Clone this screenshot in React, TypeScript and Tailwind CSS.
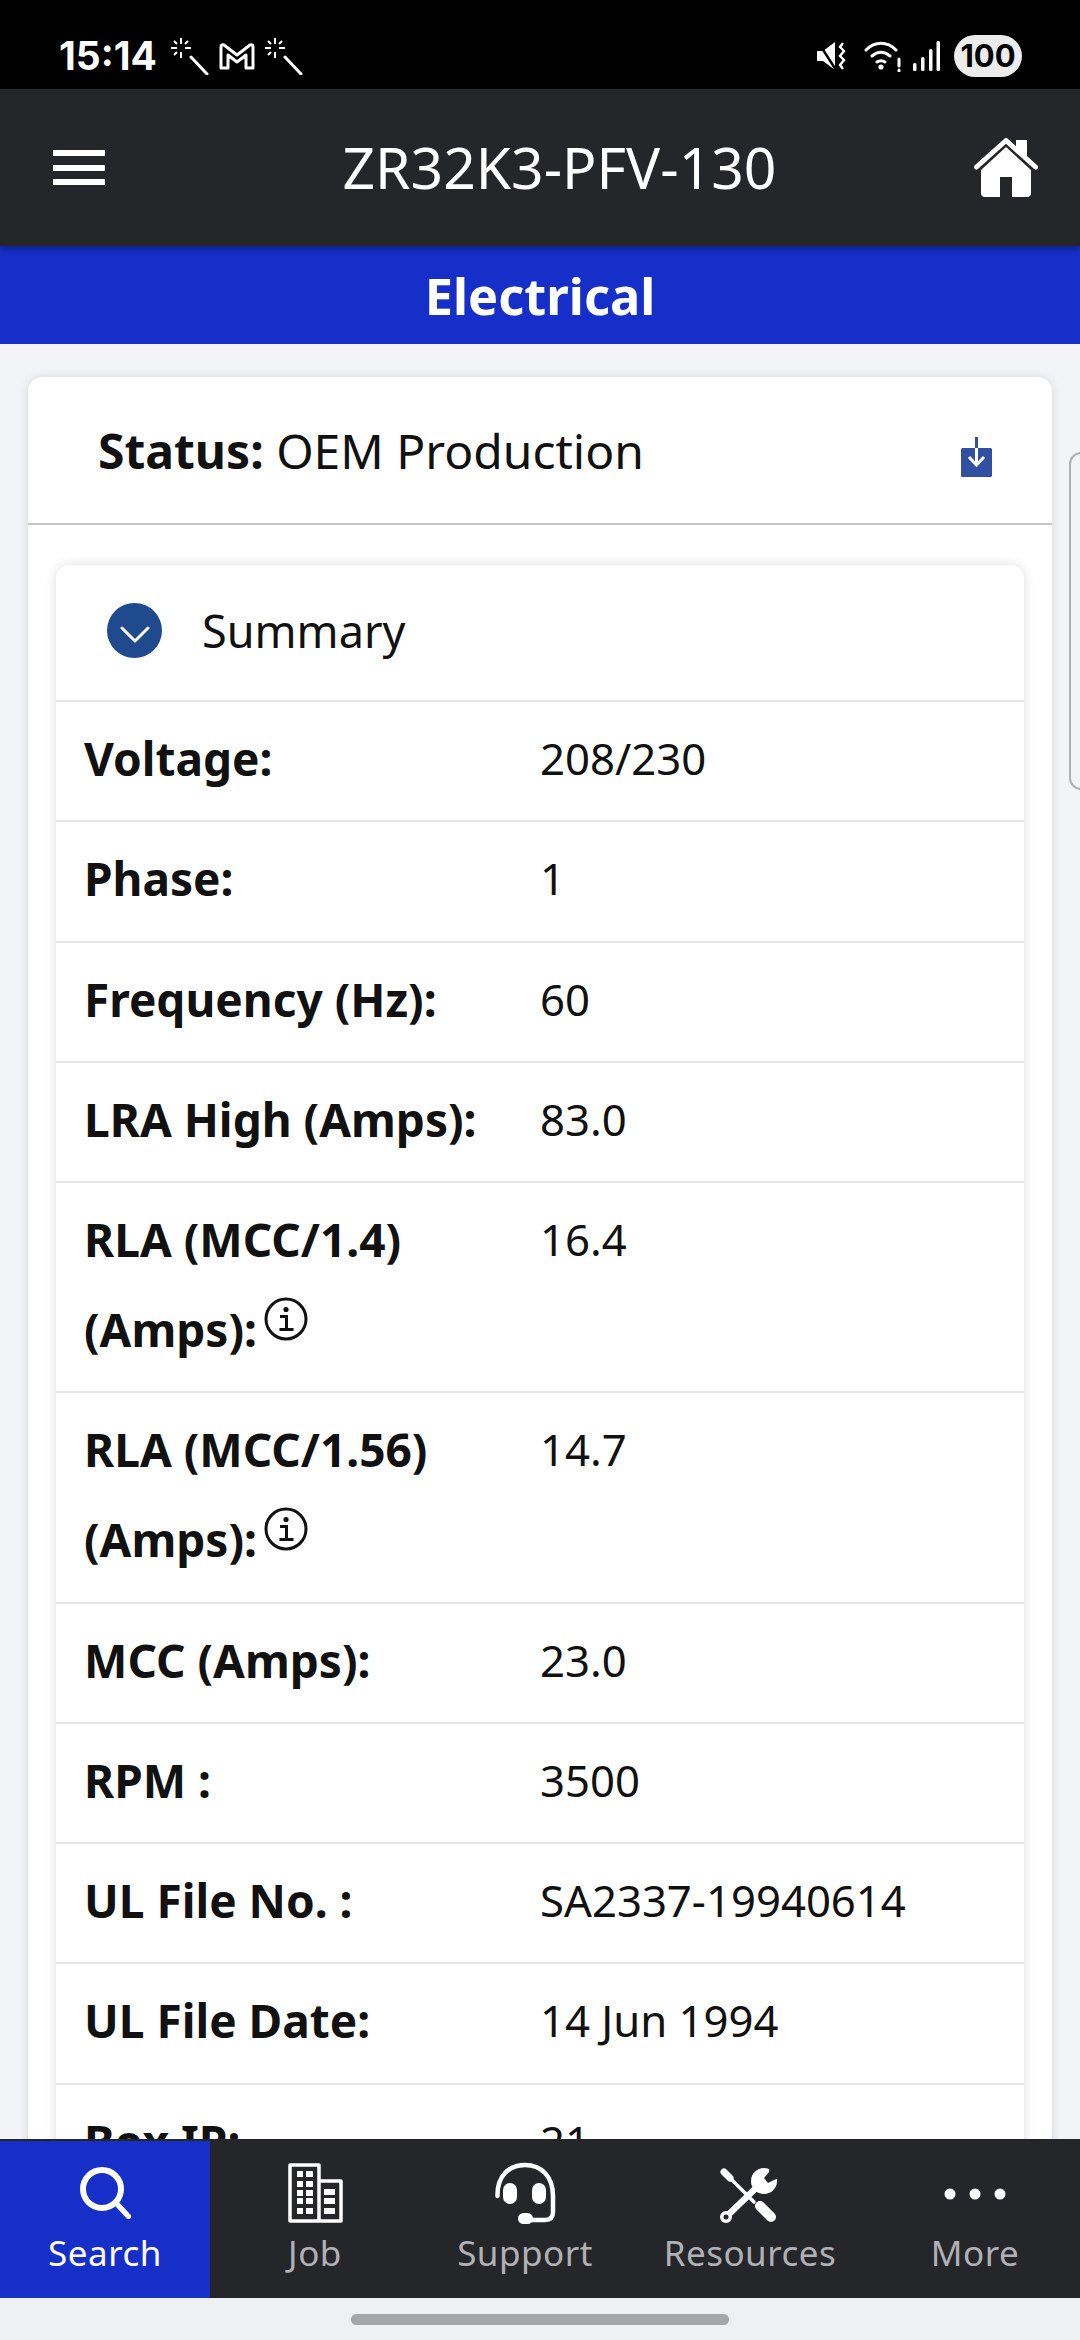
import React from "react";

const font = { fontFamily: '"Noto Sans", "Open Sans", sans-serif' };

type Row = { label: string; value: string; tall?: boolean };

function InfoIcon() {
  return (
    <svg width="44" height="44" viewBox="0 0 44 44" className="absolute left-[180px] top-[13px]" fill="none" stroke="#111" strokeWidth="3">
      <circle cx="22" cy="22" r="20" />
      <circle cx="22" cy="12.5" r="2.6" fill="#111" stroke="none" />
      <path d="M16 19.5h6.5V32M15.5 32.5h14" />
    </svg>
  );
}

const rows: Row[] = [
  { label: "Voltage:", value: "208/230" },
  { label: "Phase:", value: "1" },
  { label: "Frequency (Hz):", value: "60" },
  { label: "LRA High (Amps):", value: "83.0" },
  { label: "RLA (MCC/1.4) (Amps):", value: "16.4", tall: true },
  { label: "RLA (MCC/1.56) (Amps):", value: "14.7", tall: true },
  { label: "MCC (Amps):", value: "23.0" },
  { label: "RPM :", value: "3500" },
  { label: "UL File No. :", value: "SA2337-19940614" },
  { label: "UL File Date:", value: "14 Jun 1994" },
  { label: "Box IP:", value: "21" },
];

function Wand() {
  return (
    <svg width="38" height="38" viewBox="0 0 38 38" fill="none" stroke="white">
      <path d="M20 20 36 37" strokeWidth="3" strokeLinecap="round" />
      <path d="M10 1v6M10 15v6M0 11h6M14 11h6M3 4l3 3M17 4l-3 3M3 18l3-3" strokeWidth="2" />
    </svg>
  );
}

function NavItem({ label, active, icon }: { label: string; active?: boolean; icon: React.ReactNode }) {
  return (
    <div className={`flex flex-col items-center ${active ? "border-t-2 border-[#25262a] bg-[#162fc8] text-white" : "text-[#b0b1b5]"}`}>
      <div className={`flex items-end justify-center ${active ? "h-[84px]" : "h-[86px]"}`}>{icon}</div>
      <div className="mt-[3px] text-[35px] leading-[50px] tracking-[0.5px]">{label}</div>
    </div>
  );
}

export default function App() {
  return (
    <div style={font} className="flex h-[2340px] w-[1080px] flex-col overflow-hidden bg-[#f3f4f8] text-[#111]">
      {/* status bar */}
      <div className="flex h-[89px] shrink-0 items-center justify-between bg-black pl-[59px] pr-[58px] pt-[22px] text-white">
        <div className="flex items-center">
          <span style={{ fontFamily: '"Inter", sans-serif' }} className="text-[39px] font-bold leading-none">15:14</span>
          <span className="ml-[14px] flex items-center">
            <Wand />
            <svg width="36" height="28" viewBox="0 0 36 28" fill="none" stroke="white" strokeWidth="3" className="ml-[10px]">
              <path d="M2 26V5q0-3 3-2l13 10L31 3q3-1 3 2v21h-7V13l-9 7-9-7v13z" strokeLinejoin="round" />
            </svg>
            <span className="ml-[10px]"><Wand /></span>
          </span>
        </div>
        <div className="flex items-center">
          <svg width="30" height="28" viewBox="0 0 30 28" fill="white">
            <path d="M0 9h6l12-9v28L6 19H0z" />
            <path d="M1 0l18 28" stroke="black" strokeWidth="2.5" />
            <path d="M26 1l-3 4 4 4-4 5 4 4-4 5 3 4" fill="none" stroke="white" strokeWidth="2.4" />
          </svg>
          <svg width="38" height="32" viewBox="0 0 38 32" fill="none" stroke="white" strokeWidth="3" className="ml-[17px]" strokeLinecap="round">
            <path d="M2 10c9-9 21-9 30 0M8 16c6-5 12-5 18 0M13 22c3-2 5-2 8 0" />
            <circle cx="17" cy="27" r="2.6" fill="white" stroke="none" />
            <path d="M35 19v7M35 30v1" />
          </svg>
          <svg width="28" height="30" viewBox="0 0 28 30" fill="white" className="ml-[10px]">
            <rect x="1" y="22" width="3.5" height="8" rx="1.5" />
            <rect x="9" y="16" width="3.5" height="14" rx="1.5" />
            <rect x="17" y="8" width="3.5" height="22" rx="1.5" />
            <rect x="24.500" y="0" width="3.5" height="30" rx="1.5" />
          </svg>
          <span style={{ fontFamily: '"Inter", sans-serif' }} className="ml-[14px] flex h-[42px] w-[68px] items-center justify-center rounded-full bg-[#ececec] text-[31px] font-bold leading-none text-black">100</span>
        </div>
      </div>

      {/* header */}
      <div className="relative z-10 flex h-[157px] shrink-0 items-center justify-between bg-[#25262a] pl-[53px] pr-[42px] text-white shadow-[0_3px_6px_rgba(0,0,0,0.35)]">
        <div className="flex w-[52px] flex-col gap-[8.500px]">
          <div className="h-[6px] bg-white" />
          <div className="h-[6px] bg-white" />
          <div className="h-[6px] bg-white" />
        </div>
        <div className="ml-[40px] text-[57px] leading-none">ZR32K3-PFV-130</div>
        <svg width="64" height="60" viewBox="0 0 64 60" fill="white">
          <path d="M2.500 29 32 2.500 61.500 29" fill="none" stroke="white" strokeWidth="5" strokeLinecap="round" strokeLinejoin="round" />
          <path d="M42 2h11v20L42 12z" />
          <path d="M32 9 7 32v23q0 4 4 4h15V39h12v20h15q4 0 4-4V32z" />
        </svg>
      </div>

      {/* section title */}
      <div className="flex h-[98px] shrink-0 items-center justify-center bg-[#162fc8] pt-[2px] text-[50.500px] font-bold leading-none text-white">Electrical</div>

      {/* content */}
      <div className="relative min-h-0 flex-1 overflow-hidden px-[28px] pt-[33px]">
        <div className="rounded-t-[14px] bg-white shadow-[0_0_10px_rgba(0,0,0,0.12)]">
          <div className="flex h-[148px] items-center justify-between border-b-2 border-[#c4c4c4] pl-[70px] pr-[60px]">
            <div className="pt-[2px] text-[48px] leading-none"><span className="font-bold">Status:</span> OEM Production</div>
            <svg width="31" height="40" viewBox="0 0 31 40" className="mt-[13px]">
              <rect x="0" y="11" width="31" height="29" rx="1.5" fill="#31509f" />
              <path d="M15.500 0v11" stroke="#31509f" strokeWidth="3" />
              <path d="M15.500 11v17M8 20l7.500 8 7.500-8" stroke="white" strokeWidth="3" fill="none" />
            </svg>
          </div>
          <div className="px-[28px] pt-[40px]">
            <div className="rounded-t-[14px] bg-white shadow-[0_0_12px_rgba(0,0,0,0.14)]">
              <div className="flex h-[137px] items-center border-b-2 border-[#e6e6e6] pb-[4px] pl-[51px]">
                <span className="flex h-[55px] w-[55px] items-center justify-center rounded-full bg-[#1f4a8d]">
                  <svg width="30" height="17" viewBox="0 0 30 17" fill="none" stroke="white" strokeWidth="3" strokeLinecap="round" strokeLinejoin="round" className="mt-[8px]">
                    <path d="M2 2l13 13L28 2" />
                  </svg>
                </span>
                <span className="ml-[40px] text-[45px] leading-none">Summary</span>
              </div>
              {rows.map((r, i) => (
                <div key={i} className={`grid grid-cols-[455px_1fr] border-b-2 border-[#e6e6e6] pl-[29px] ${r.tall ? "h-[210.250px]" : "h-[120.250px]"}`}>
                  <div className="relative -ml-px pt-[11px] text-[46px] font-bold leading-[90px]">
                    {r.tall ? (
                      <>
                        <div>{r.label.split(" (Amps)")[0]}</div>
                        <div className="relative">(Amps):<InfoIcon /></div>
                      </>
                    ) : (
                      r.label
                    )}
                  </div>
                  <div className="pt-[11px] text-[43.700px] leading-[90px]">{r.value}</div>
                </div>
              ))}
            </div>
          </div>
        </div>
        <div className="absolute left-[1069px] top-[108px] h-[338px] w-[40px] rounded-[12px] border-2 border-[#aeb0b4]" />
      </div>

      {/* bottom nav */}
      <div className="relative z-10 grid h-[159px] shrink-0 grid-cols-[210px_210px_210px_240px_210px] bg-[#25262a]">
        <NavItem
          label="Search"
          active
          icon={
            <svg width="51" height="52" viewBox="0 0 51 52" fill="none" stroke="white" strokeLinecap="round" className="mb-[6px] ml-[1px]">
              <circle cx="22" cy="22" r="19" strokeWidth="6" />
              <path d="M36 36l12.500 13.500" strokeWidth="5.500" />
            </svg>
          }
        />
        <NavItem
          label="Job"
          icon={
            <svg width="55" height="60" viewBox="0 0 55 60" fill="none" stroke="white" strokeWidth="3.500" className="mb-[2px]">
              <path d="M2 58V2h29v56zM31 18h22v40H31z" strokeLinejoin="round" />
              <g fill="white" stroke="none">
                {[8, 18, 27, 35, 45].map((y) => (
                  <g key={y}>
                    <rect x="9" y={y} width="6" height="6" />
                    <rect x="18" y={y} width="7" height="6" />
                  </g>
                ))}
                <rect x="36" y="26" width="11" height="6" />
                <rect x="36" y="35" width="11" height="6" />
                <rect x="36" y="45" width="11" height="6" />
              </g>
            </svg>
          }
        />
        <NavItem
          label="Support"
          icon={
            <svg width="62" height="62" viewBox="0 0 62 62" fill="none" stroke="white" strokeWidth="4.500" className="mb-px">
              <path d="M3.500 34C3 14 15 3 31 3s28 11 28 31v16q0 8-8 8H35" strokeLinecap="round" />
              <rect x="9" y="21" width="14" height="21" rx="7" fill="white" stroke="none" />
              <rect x="38" y="21" width="14" height="21" rx="7" fill="white" stroke="none" />
              <rect x="24" y="51" width="15" height="11" rx="5.500" fill="white" stroke="none" />
            </svg>
          }
        />
        <NavItem
          label="Resources"
          icon={
            <svg width="60" height="56" viewBox="0 0 60 56" fill="none" stroke="white" strokeLinecap="round" className="mb-[2px]">
              <path d="M4 5l6 6" strokeWidth="7" />
              <path d="M8 9l26 26" strokeWidth="3.500" />
              <path d="M40 39l11 11" strokeWidth="10" strokeLinecap="round" />
              <path d="M6 50l30-29" strokeWidth="6.500" />
              <circle cx="6" cy="50" r="6" fill="white" stroke="none" />
              <circle cx="6" cy="50" r="2.500" fill="#25262a" stroke="none" />
              <circle cx="44" cy="14" r="13" fill="white" stroke="none" />
              <polygon points="50,-2 49,5 44,11 48,16 54,13 62,10 62,-2" fill="#25262a" stroke="none" />
            </svg>
          }
        />
        <NavItem
          label="More"
          icon={
            <svg width="62" height="12" viewBox="0 0 62 12" fill="white" className="mb-[25px]">
              <circle cx="6" cy="6" r="5.500" />
              <circle cx="31" cy="6" r="5.500" />
              <circle cx="56" cy="6" r="5.500" />
            </svg>
          }
        />
      </div>

      {/* gesture bar */}
      <div className="flex h-[42px] shrink-0 justify-center bg-[#eff0f4] pt-[16px]">
        <div className="h-[11px] w-[378px] rounded-full bg-[#a6a6a8]" />
      </div>
    </div>
  );
}
